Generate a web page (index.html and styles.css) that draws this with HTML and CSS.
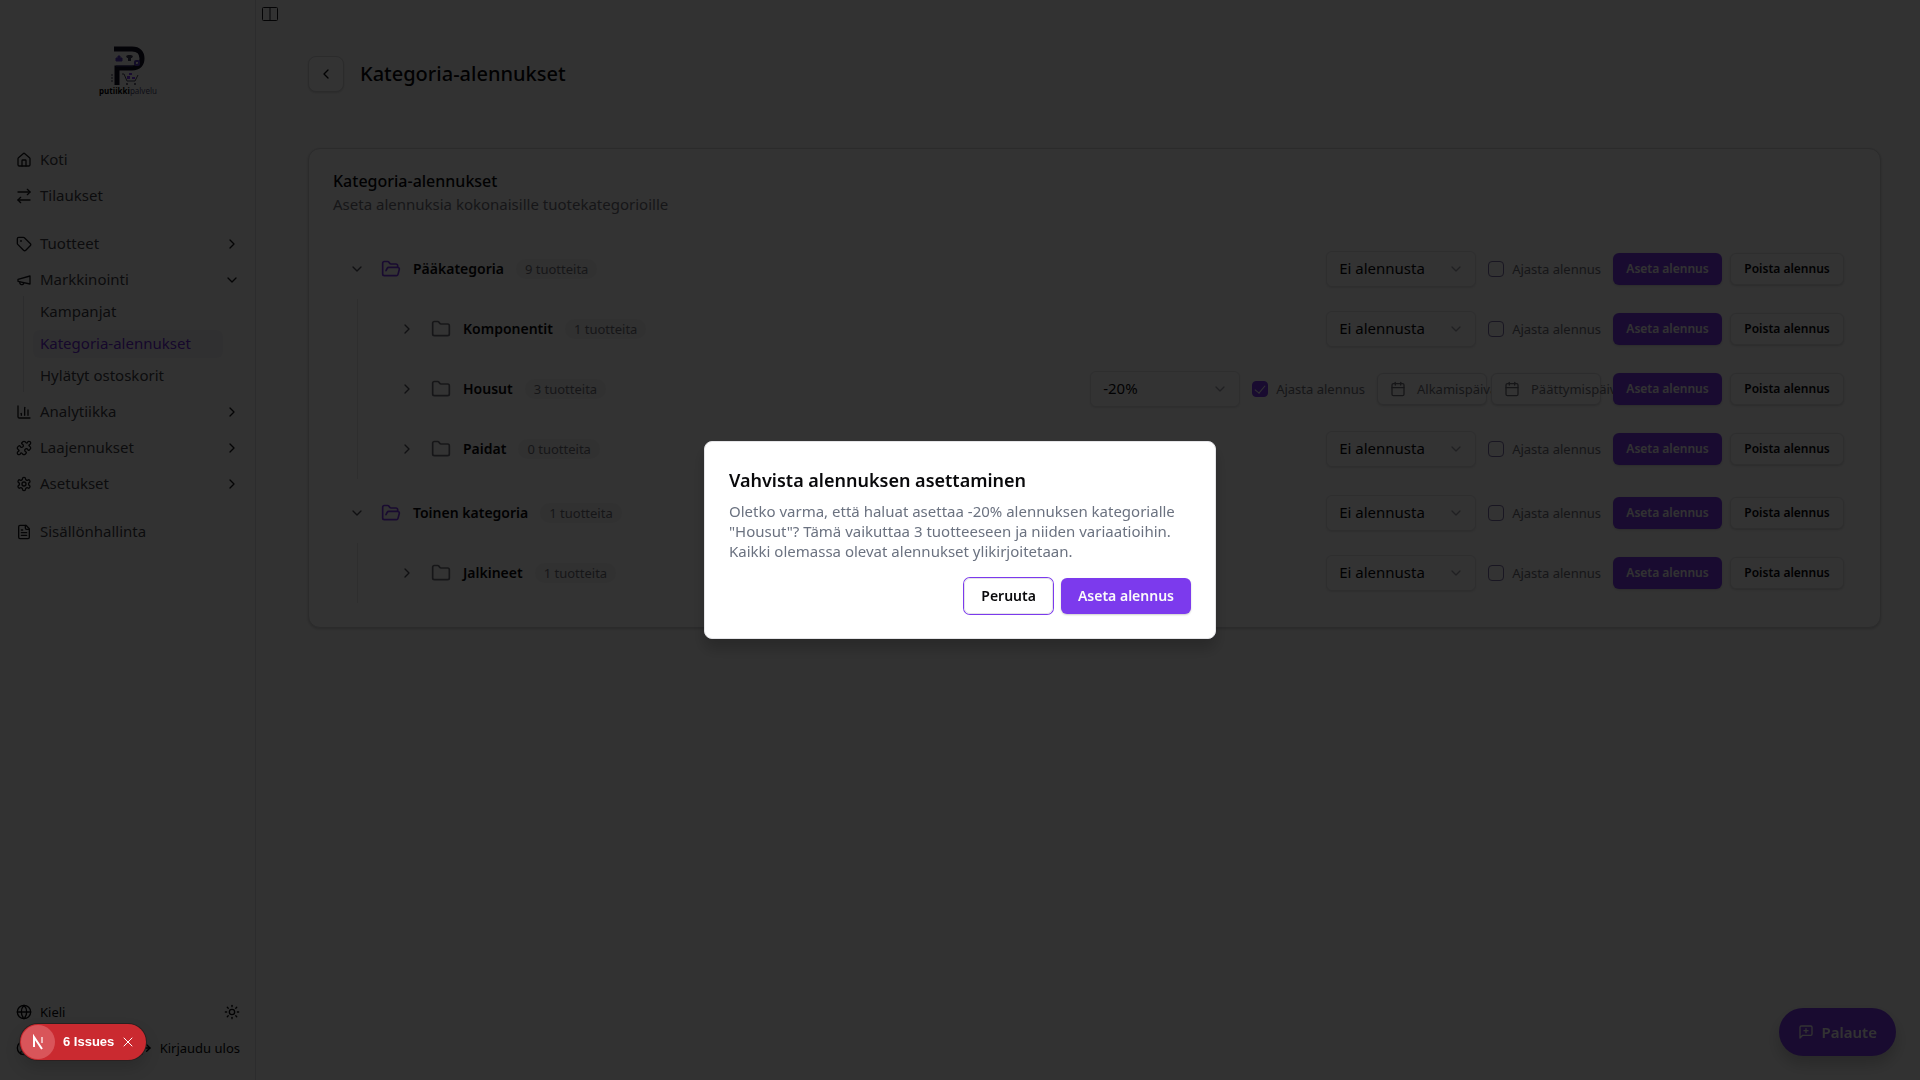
FILE: index.html
```
<!DOCTYPE html>
<html lang="fi">
<head>
    <meta charset="UTF-8">
    <meta name="viewport" content="width=device-width, initial-scale=1.0">
    <title>Kategoria-alennukset</title>
    <link rel="stylesheet" href="styles.css">
</head>
<body>
    <!-- Ikonit -->
    <svg class="sprite" aria-hidden="true">
        <symbol id="i-home" viewBox="0 0 24 24"><path d="M15 21v-8a1 1 0 0 0-1-1h-4a1 1 0 0 0-1 1v8"/><path d="M3 10a2 2 0 0 1 .709-1.528l7-5.999a2 2 0 0 1 2.582 0l7 5.999A2 2 0 0 1 21 10v9a2 2 0 0 1-2 2H5a2 2 0 0 1-2-2z"/></symbol>
        <symbol id="i-swap" viewBox="0 0 24 24"><path d="m17 2 4 4-4 4"/><path d="M3 6h18"/><path d="m7 22-4-4 4-4"/><path d="M21 18H3"/></symbol>
        <symbol id="i-tag" viewBox="0 0 24 24"><path d="M12.586 2.586A2 2 0 0 0 11.172 2H4a2 2 0 0 0-2 2v7.172a2 2 0 0 0 .586 1.414l8.704 8.704a2.426 2.426 0 0 0 3.42 0l6.58-6.58a2.426 2.426 0 0 0 0-3.42z"/><circle cx="7.5" cy="7.5" r=".5"/></symbol>
        <symbol id="i-megaphone" viewBox="0 0 24 24"><path d="m3 11 18-5v12L3 14v-3z"/><path d="M11.6 16.8a3 3 0 1 1-5.8-1.6"/></symbol>
        <symbol id="i-chart" viewBox="0 0 24 24"><path d="M3 3v16a2 2 0 0 0 2 2h16"/><path d="M18 17V9"/><path d="M13 17V5"/><path d="M8 17v-3"/></symbol>
        <symbol id="i-puzzle" viewBox="0 0 24 24"><path d="M19.439 7.85c-.049.322.059.648.289.878l1.568 1.568c.47.47.706 1.087.706 1.704s-.235 1.233-.706 1.704l-1.611 1.611a.98.98 0 0 1-.837.276c-.47-.07-.802-.48-.968-.925a2.501 2.501 0 1 0-3.214 3.214c.446.166.855.497.925.968a.979.979 0 0 1-.276.837l-1.61 1.61a2.404 2.404 0 0 1-1.705.707 2.402 2.402 0 0 1-1.704-.706l-1.568-1.568a1.026 1.026 0 0 0-.877-.29c-.493.074-.84.504-1.02.968a2.5 2.5 0 1 1-3.237-3.237c.464-.18.894-.527.967-1.02a1.026 1.026 0 0 0-.289-.877l-1.568-1.568A2.402 2.402 0 0 1 1.998 12c0-.617.236-1.234.706-1.704L4.23 8.77c.24-.24.581-.353.917-.303.515.077.877.528 1.073 1.01a2.5 2.5 0 1 0 3.259-3.259c-.482-.196-.933-.558-1.01-1.073-.05-.336.062-.676.303-.917l1.525-1.525A2.402 2.402 0 0 1 12 1.998c.617 0 1.234.236 1.704.706l1.568 1.568c.23.23.556.338.877.29.493-.074.84-.504 1.02-.968a2.5 2.5 0 1 1 3.237 3.237c-.464.18-.894.527-.967 1.02Z"/></symbol>
        <symbol id="i-gear" viewBox="0 0 24 24"><path d="M12.22 2h-.44a2 2 0 0 0-2 2v.18a2 2 0 0 1-1 1.73l-.43.25a2 2 0 0 1-2 0l-.15-.08a2 2 0 0 0-2.73.73l-.22.38a2 2 0 0 0 .73 2.73l.15.1a2 2 0 0 1 1 1.72v.51a2 2 0 0 1-1 1.74l-.15.09a2 2 0 0 0-.73 2.73l.22.38a2 2 0 0 0 2.73.73l.15-.08a2 2 0 0 1 2 0l.43.25a2 2 0 0 1 1 1.73V20a2 2 0 0 0 2 2h.44a2 2 0 0 0 2-2v-.18a2 2 0 0 1 1-1.73l.43-.25a2 2 0 0 1 2 0l.15.08a2 2 0 0 0 2.73-.73l.22-.39a2 2 0 0 0-.73-2.73l-.15-.08a2 2 0 0 1-1-1.74v-.5a2 2 0 0 1 1-1.74l.15-.09a2 2 0 0 0 .73-2.73l-.22-.38a2 2 0 0 0-2.73-.73l-.15.08a2 2 0 0 1-2 0l-.43-.25a2 2 0 0 1-1-1.73V4a2 2 0 0 0-2-2z"/><circle cx="12" cy="12" r="3"/></symbol>
        <symbol id="i-file" viewBox="0 0 24 24"><path d="M15 2H6a2 2 0 0 0-2 2v16a2 2 0 0 0 2 2h12a2 2 0 0 0 2-2V7Z"/><path d="M14 2v4a2 2 0 0 0 2 2h4"/><path d="M10 9H8"/><path d="M16 13H8"/><path d="M16 17H8"/></symbol>
        <symbol id="i-globe" viewBox="0 0 24 24"><circle cx="12" cy="12" r="10"/><path d="M12 2a14.5 14.5 0 0 0 0 20 14.5 14.5 0 0 0 0-20"/><path d="M2 12h20"/></symbol>
        <symbol id="i-sun" viewBox="0 0 24 24"><circle cx="12" cy="12" r="4"/><path d="M12 2v2"/><path d="M12 20v2"/><path d="m4.93 4.93 1.41 1.41"/><path d="m17.66 17.66 1.41 1.41"/><path d="M2 12h2"/><path d="M20 12h2"/><path d="m6.34 17.66-1.41 1.41"/><path d="m19.07 4.93-1.41 1.41"/></symbol>
        <symbol id="i-user" viewBox="0 0 24 24"><circle cx="12" cy="12" r="10"/><circle cx="12" cy="10" r="3"/><path d="M7 20.662V19a2 2 0 0 1 2-2h6a2 2 0 0 1 2 2v1.662"/></symbol>
        <symbol id="i-logout" viewBox="0 0 24 24"><path d="M9 21H5a2 2 0 0 1-2-2V5a2 2 0 0 1 2-2h4"/><path d="m16 17 5-5-5-5"/><path d="M21 12H9"/></symbol>
        <symbol id="i-right" viewBox="0 0 24 24"><path d="m9 18 6-6-6-6"/></symbol>
        <symbol id="i-left" viewBox="0 0 24 24"><path d="m15 18-6-6 6-6"/></symbol>
        <symbol id="i-down" viewBox="0 0 24 24"><path d="m6 9 6 6 6-6"/></symbol>
        <symbol id="i-folder" viewBox="0 0 24 24"><path d="M20 20a2 2 0 0 0 2-2V8a2 2 0 0 0-2-2h-7.900a2 2 0 0 1-1.690-.900L9.600 3.900A2 2 0 0 0 7.930 3H4a2 2 0 0 0-2 2v13a2 2 0 0 0 2 2Z"/></symbol>
        <symbol id="i-folder-open" viewBox="0 0 24 24"><path d="m6 14 1.500-2.900A2 2 0 0 1 9.240 10H20a2 2 0 0 1 1.940 2.500l-1.540 6a2 2 0 0 1-1.950 1.500H4a2 2 0 0 1-2-2V5a2 2 0 0 1 2-2h3.900a2 2 0 0 1 1.690.900l.810 1.200a2 2 0 0 0 1.670.900H18a2 2 0 0 1 2 2v2"/></symbol>
        <symbol id="i-calendar" viewBox="0 0 24 24"><path d="M8 2v4"/><path d="M16 2v4"/><rect width="18" height="18" x="3" y="4" rx="2"/><path d="M3 10h18"/></symbol>
        <symbol id="i-message" viewBox="0 0 24 24"><path d="M21 15a2 2 0 0 1-2 2H7l-4 4V5a2 2 0 0 1 2-2h14a2 2 0 0 1 2 2z"/><path d="M12 7v6"/><path d="M9 10h6"/></symbol>
        <symbol id="i-x" viewBox="0 0 24 24"><path d="M20 4 4 20"/><path d="m4 4 16 16"/></symbol>
    </svg>

    <div class="app">
        <!-- Sivupalkki -->
        <aside class="sidebar">
            <a class="logo" href="#">
                <svg width="34" height="40" viewBox="0 0 34 40" aria-hidden="true">
                    <path d="M3 3h18c7 0 10 4 10 9.500S28 22 21 22H6v17" fill="none" stroke="#120f26" stroke-width="5"/>
                    <path d="M5 20h17" stroke="#3b2f80" stroke-width="1"/>
                    <path d="M5 12h6v3H5zM7 12v-2h2v2" fill="#5b3fc4" stroke="#5b3fc4" stroke-width="1"/>
                    <path d="m15 10 2-1h3l2 1-1 2h-1v3h-3v-3h-1z" fill="#3f3d56"/>
                    <rect x="24" y="15" width="4" height="4" rx="1" fill="none" stroke="#5b3fc4" stroke-width="2"/>
                    <path d="M0 29h2M0 32h2M0 35h2" stroke="#3f3d56"/>
                    <path d="M11 28h2l3 7h8l3-6" fill="none" stroke="#3f3d56" stroke-width="1"/>
                    <path d="M16 30h3v3h-3zM21 31h3v2h-3zM18 27h3v2h-3z" fill="#7c3aed"/>
                    <circle cx="16" cy="38" r="1" fill="#3f3d56"/><circle cx="24" cy="38" r="1" fill="#3f3d56"/>
                </svg>
                <span class="logo-text"><b>putiikki</b>palvelu</span>
            </a>

            <nav class="nav">
                <ul>
                    <li><a class="nav-item" href="#"><svg class="icon"><use href="#i-home"/></svg><span>Koti</span></a></li>
                    <li><a class="nav-item" href="#"><svg class="icon"><use href="#i-swap"/></svg><span>Tilaukset</span></a></li>
                </ul>
                <ul>
                    <li><button class="nav-item"><svg class="icon"><use href="#i-tag"/></svg><span>Tuotteet</span><svg class="icon"><use href="#i-right"/></svg></button></li>
                    <li>
                        <button class="nav-item"><svg class="icon"><use href="#i-megaphone"/></svg><span>Markkinointi</span><svg class="icon"><use href="#i-down"/></svg></button>
                        <ul class="subnav">
                            <li><a href="#">Kampanjat</a></li>
                            <li><a class="active" href="#">Kategoria-alennukset</a></li>
                            <li><a href="#">Hylätyt ostoskorit</a></li>
                        </ul>
                    </li>
                    <li><button class="nav-item"><svg class="icon"><use href="#i-chart"/></svg><span>Analytiikka</span><svg class="icon"><use href="#i-right"/></svg></button></li>
                    <li><button class="nav-item"><svg class="icon"><use href="#i-puzzle"/></svg><span>Laajennukset</span><svg class="icon"><use href="#i-right"/></svg></button></li>
                    <li><button class="nav-item"><svg class="icon"><use href="#i-gear"/></svg><span>Asetukset</span><svg class="icon"><use href="#i-right"/></svg></button></li>
                </ul>
                <ul>
                    <li><a class="nav-item" href="#"><svg class="icon"><use href="#i-file"/></svg><span>Sisällönhallinta</span></a></li>
                </ul>
            </nav>

            <div class="sidebar-footer">
                <div class="footer-row">
                    <button class="footer-btn"><svg class="icon"><use href="#i-globe"/></svg>Kieli</button>
                    <button class="footer-btn" aria-label="Teema"><svg class="icon"><use href="#i-sun"/></svg></button>
                </div>
                <div class="footer-row">
                    <button class="footer-btn" aria-label="Profiili"><svg class="icon"><use href="#i-user"/></svg></button>
                    <button class="footer-btn"><svg class="icon"><use href="#i-logout"/></svg>Kirjaudu ulos</button>
                </div>
            </div>
        </aside>

        <!-- Sisältö -->
        <main class="main">
            <button class="trigger" aria-label="Sivupalkki">
                <svg width="16" height="14" viewBox="0 0 16 14"><rect x="0.500" y="0.500" width="15" height="13" rx="1"/><path d="M8 1v12"/></svg>
            </button>

            <header class="page-header">
                <button class="back" aria-label="Takaisin"><svg class="icon"><use href="#i-left"/></svg></button>
                <h1>Kategoria-alennukset</h1>
            </header>

            <section class="card">
                <h2>Kategoria-alennukset</h2>
                <p class="card-desc">Aseta alennuksia kokonaisille tuotekategorioille</p>

                <div class="tree">
                    <div class="node">
                        <div class="row">
                            <button class="toggle" aria-label="Sulje"><svg class="icon"><use href="#i-down"/></svg></button>
                            <svg class="folder open"><use href="#i-folder-open"/></svg>
                            <span class="name">Pääkategoria</span>
                            <span class="badge">9 tuotteita</span>
                            <div class="controls">
                                <div class="select"><select aria-label="Alennus"><option>Ei alennusta</option></select><svg class="icon"><use href="#i-down"/></svg></div>
                                <label class="schedule"><input type="checkbox">Ajasta alennus</label>
                                <div class="actions"><button class="btn primary">Aseta alennus</button><button class="btn outline">Poista alennus</button></div>
                            </div>
                        </div>
                        <div class="children">
                            <div class="row">
                                <button class="toggle" aria-label="Avaa"><svg class="icon"><use href="#i-right"/></svg></button>
                                <svg class="folder"><use href="#i-folder"/></svg>
                                <span class="name">Komponentit</span>
                                <span class="badge">1 tuotteita</span>
                                <div class="controls">
                                    <div class="select"><select aria-label="Alennus"><option>Ei alennusta</option></select><svg class="icon"><use href="#i-down"/></svg></div>
                                    <label class="schedule"><input type="checkbox">Ajasta alennus</label>
                                    <div class="actions"><button class="btn primary">Aseta alennus</button><button class="btn outline">Poista alennus</button></div>
                                </div>
                            </div>
                            <div class="row">
                                <button class="toggle" aria-label="Avaa"><svg class="icon"><use href="#i-right"/></svg></button>
                                <svg class="folder"><use href="#i-folder"/></svg>
                                <span class="name">Housut</span>
                                <span class="badge">3 tuotteita</span>
                                <div class="controls">
                                    <div class="select"><select aria-label="Alennus"><option>-20%</option></select><svg class="icon"><use href="#i-down"/></svg></div>
                                    <label class="schedule"><input type="checkbox" checked>Ajasta alennus</label>
                                    <div class="dates">
                                        <button class="date"><svg class="icon"><use href="#i-calendar"/></svg>Alkamispäivä</button>
                                        <button class="date"><svg class="icon"><use href="#i-calendar"/></svg>Päättymispäivä</button>
                                    </div>
                                    <div class="actions"><button class="btn primary">Aseta alennus</button><button class="btn outline">Poista alennus</button></div>
                                </div>
                            </div>
                            <div class="row">
                                <button class="toggle" aria-label="Avaa"><svg class="icon"><use href="#i-right"/></svg></button>
                                <svg class="folder"><use href="#i-folder"/></svg>
                                <span class="name">Paidat</span>
                                <span class="badge">0 tuotteita</span>
                                <div class="controls">
                                    <div class="select"><select aria-label="Alennus"><option>Ei alennusta</option></select><svg class="icon"><use href="#i-down"/></svg></div>
                                    <label class="schedule"><input type="checkbox">Ajasta alennus</label>
                                    <div class="actions"><button class="btn primary">Aseta alennus</button><button class="btn outline">Poista alennus</button></div>
                                </div>
                            </div>
                        </div>
                    </div>

                    <div class="node">
                        <div class="row">
                            <button class="toggle" aria-label="Sulje"><svg class="icon"><use href="#i-down"/></svg></button>
                            <svg class="folder open"><use href="#i-folder-open"/></svg>
                            <span class="name">Toinen kategoria</span>
                            <span class="badge">1 tuotteita</span>
                            <div class="controls">
                                <div class="select"><select aria-label="Alennus"><option>Ei alennusta</option></select><svg class="icon"><use href="#i-down"/></svg></div>
                                <label class="schedule"><input type="checkbox">Ajasta alennus</label>
                                <div class="actions"><button class="btn primary">Aseta alennus</button><button class="btn outline">Poista alennus</button></div>
                            </div>
                        </div>
                        <div class="children">
                            <div class="row">
                                <button class="toggle" aria-label="Avaa"><svg class="icon"><use href="#i-right"/></svg></button>
                                <svg class="folder"><use href="#i-folder"/></svg>
                                <span class="name">Jalkineet</span>
                                <span class="badge">1 tuotteita</span>
                                <div class="controls">
                                    <div class="select"><select aria-label="Alennus"><option>Ei alennusta</option></select><svg class="icon"><use href="#i-down"/></svg></div>
                                    <label class="schedule"><input type="checkbox">Ajasta alennus</label>
                                    <div class="actions"><button class="btn primary">Aseta alennus</button><button class="btn outline">Poista alennus</button></div>
                                </div>
                            </div>
                        </div>
                    </div>
                </div>
            </section>
        </main>
    </div>

    <button class="feedback"><svg class="icon"><use href="#i-message"/></svg>Palaute</button>

    <!-- Vahvistusikkuna -->
    <div class="overlay">
        <div class="modal" role="alertdialog" aria-labelledby="modal-title" aria-describedby="modal-text">
            <h2 id="modal-title">Vahvista alennuksen asettaminen</h2>
            <p id="modal-text">Oletko varma, että haluat asettaa -20% alennuksen kategorialle "Housut"? Tämä vaikuttaa 3 tuotteeseen ja niiden variaatioihin. Kaikki olemassa olevat alennukset ylikirjoitetaan.</p>
            <div class="modal-buttons">
                <button class="modal-btn cancel">Peruuta</button>
                <button class="modal-btn confirm">Aseta alennus</button>
            </div>
        </div>
    </div>

    <div class="issues">
        <span class="issues-logo">
            <svg width="16" height="16" viewBox="0 0 16 16" fill="none" stroke="#fff" stroke-width="2"><path d="M4 13V3l8 12"/><path d="M12 3v6" stroke-opacity="0.6"/></svg>
        </span>
        <button class="issues-text">6 Issues</button>
        <button class="issues-close" aria-label="Close"><svg class="icon"><use href="#i-x"/></svg></button>
    </div>
</body>
</html>
```
FILE: styles.css
```
* {
    box-sizing: border-box;
}

body {
    font-family: "Noto Sans", "Open Sans", sans-serif;
    font-size: 15px;
    line-height: 20px;
    margin: 0;
    color: #09090b;
    background-color: #fafafa;
}

h1, h2, p, ul {
    margin: 0;
    padding: 0;
}

ul {
    list-style: none;
}

a {
    color: inherit;
    text-decoration: none;
}

button, select {
    font: inherit;
    color: inherit;
    background: none;
    border: none;
    padding: 0;
    cursor: pointer;
}

.sprite {
    display: none;
}

.icon {
    width: 16px;
    height: 16px;
    flex-shrink: 0;
    fill: none;
    stroke: currentColor;
    stroke-width: 2;
    stroke-linecap: round;
    stroke-linejoin: round;
}

.app {
    display: flex;
    min-height: 100vh;
}

/* Sivupalkki */
.sidebar {
    display: flex;
    flex-direction: column;
    width: 256px;
    flex-shrink: 0;
    padding: 0 7px 16px 8px;
    border-right: 1px solid #dcdce0;
}

.logo {
    display: flex;
    flex-direction: column;
    align-items: center;
    height: 144px;
    padding-top: 46px;
}

.logo-text {
    font-size: 8px;
    line-height: 10px;
    color: #4b4870;
}

.logo-text b {
    color: #000;
}

.nav {
    display: flex;
    flex-direction: column;
    gap: 16px;
    color: #3f3f46;
}

.nav > ul {
    display: flex;
    flex-direction: column;
    gap: 4px;
}

.nav-item {
    display: flex;
    align-items: center;
    gap: 8px;
    width: 100%;
    height: 32px;
    padding: 0 8px;
    text-align: left;
}

.nav-item span {
    flex: 1;
    padding-bottom: 2px;
}

.nav-item .icon {
    color: #18181b;
}

.subnav {
    display: flex;
    flex-direction: column;
    gap: 4px;
    margin: 0 25px 0 15px;
    padding: 2px 0 2px 9px;
    border-left: 1px solid #dcdce0;
}

.subnav a {
    display: block;
    padding: 3px 7px 5px;
    border-radius: 6px;
    white-space: nowrap;
}

.subnav .active {
    color: #6d28d9;
    background-color: #f1f1f3;
}

.sidebar-footer {
    display: flex;
    flex-direction: column;
    gap: 4px;
    margin-top: auto;
    padding: 0 8px;
    font-size: 13px;
}

.footer-row {
    display: flex;
    justify-content: space-between;
}

.footer-btn {
    display: flex;
    align-items: center;
    gap: 8px;
    height: 32px;
}

/* Sisältö */
.main {
    flex: 1;
    min-width: 0;
}

.trigger {
    display: block;
    height: 28px;
    padding-left: 6px;
}

.trigger svg {
    display: block;
    fill: none;
    stroke: #18181b;
}

.page-header {
    display: flex;
    align-items: center;
    gap: 16px;
    padding: 28px 52px 56px;
}

.back {
    display: flex;
    align-items: center;
    justify-content: center;
    width: 36px;
    height: 36px;
    border: 1px solid #d4d4d8;
    border-radius: 8px;
    background-color: #fff;
    box-shadow: 0 1px 2px rgba(0, 0, 0, 0.15);
}

h1 {
    font-size: 20px;
    line-height: 28px;
    font-weight: 500;
}

.card {
    margin: 0 39px 0 52px;
    padding: 24px 24px 20px;
    border: 1px solid #d4d4d8;
    border-radius: 12px;
    background-color: #fdfdfd;
    box-shadow: 0 1px 3px rgba(0, 0, 0, 0.2);
}

.card h2 {
    font-size: 16px;
    line-height: 16px;
    font-weight: 500;
}

.card-desc {
    margin-top: 5px;
    color: #71717a;
}

/* Kategoriapuu */
.tree {
    display: flex;
    flex-direction: column;
    gap: 8px;
    padding: 29px 0 4px;
}

.row {
    display: flex;
    align-items: center;
    gap: 12px;
    padding: 8px 12px;
}

.children {
    display: flex;
    flex-direction: column;
    gap: 8px;
    margin: 4px 0 0 24px;
    padding: 4px 0 4px 25px;
    border-left: 1px solid #e4e4e7;
}

.toggle {
    display: flex;
    align-items: center;
    justify-content: center;
    width: 24px;
    height: 24px;
    color: #52525b;
}

.folder {
    width: 20px;
    height: 20px;
    fill: none;
    stroke: #71717a;
    stroke-width: 2;
    stroke-linecap: round;
    stroke-linejoin: round;
}

.folder.open {
    stroke: #7c3aed;
}

.name {
    font-size: 14px;
    font-weight: 600;
}

.badge {
    padding: 0 9px;
    border-radius: 10px;
    font-size: 13px;
    color: #71717a;
    background-color: #f4f4f5;
}

.controls {
    display: flex;
    align-items: center;
    gap: 12px;
    margin-left: auto;
    white-space: nowrap;
}

.select {
    position: relative;
    width: 150px;
}

.select select {
    display: block;
    appearance: none;
    width: 100%;
    height: 36px;
    padding: 0 12px 2px;
    border: 1px solid #e4e4e7;
    border-radius: 6px;
    background-color: #fff;
    box-shadow: 0 1px 2px rgba(0, 0, 0, 0.1);
}

.select .icon {
    position: absolute;
    right: 12px;
    top: 10px;
    color: #a1a1aa;
    pointer-events: none;
}

.schedule {
    display: flex;
    align-items: center;
    gap: 8px;
    font-size: 13px;
    color: #71717a;
}

.schedule input {
    display: grid;
    place-items: center;
    appearance: none;
    width: 16px;
    height: 16px;
    margin: 0;
    border: 1px solid #7c6fa8;
    border-radius: 4px;
}

.schedule input:checked {
    border-color: #7c3aed;
    background-color: #7c3aed;
}

.schedule input:checked::before {
    content: "";
    width: 5px;
    height: 9px;
    margin-bottom: 2px;
    border: solid #fafafa;
    border-width: 0 1px 1px 0;
    transform: rotate(40deg);
}

.dates {
    display: flex;
    gap: 4px;
}

.date {
    display: flex;
    align-items: center;
    gap: 11px;
    width: 110px;
    height: 32px;
    padding: 0 12px;
    border: 1px solid #dcdce0;
    border-radius: 6px;
    font-size: 13px;
    color: #71717a;
    background-color: #fff;
    box-shadow: 0 1px 2px rgba(0, 0, 0, 0.15);
}

.actions {
    display: flex;
    gap: 8px;
}

.btn {
    width: 109px;
    height: 32px;
    border-radius: 6px;
    font-size: 12px;
    font-weight: 600;
    box-shadow: 0 1px 2px rgba(0, 0, 0, 0.15);
}

.btn.primary {
    color: #fafafa;
    background-color: #7c3aed;
}

.btn.outline {
    width: 114px;
    border: 1px solid #e4e4e7;
    background-color: #fff;
}

.feedback {
    position: fixed;
    right: 24px;
    bottom: 24px;
    display: flex;
    align-items: center;
    gap: 8px;
    height: 48px;
    padding: 0 19px;
    border-radius: 24px;
    font-weight: 600;
    color: #fafafa;
    background-color: #7c3aed;
    box-shadow: 0 8px 16px rgba(0, 0, 0, 0.2);
}

/* Vahvistusikkuna */
.overlay {
    position: fixed;
    inset: 0;
    display: flex;
    align-items: center;
    justify-content: center;
    background-color: rgba(0, 0, 0, 0.8);
}

.modal {
    width: 512px;
    padding: 24px;
    border: 1px solid #e4e4e7;
    border-radius: 8px;
    background-color: #fff;
    box-shadow: 0 10px 15px rgba(0, 0, 0, 0.2);
}

.modal h2 {
    font-size: 18px;
    line-height: 28px;
    font-weight: 600;
}

.modal p {
    margin-top: 7px;
    color: #6b7280;
}

.modal-buttons {
    display: flex;
    justify-content: flex-end;
    gap: 8px;
    margin-top: 17px;
}

.modal-btn {
    height: 36px;
    padding: 0 17px;
    border-radius: 6px;
    font-size: 14px;
    font-weight: 600;
}

.cancel {
    padding: 0 16px;
    border: 1px solid #e4e4e7;
    box-shadow: 0 0 0 1px #7c3aed;
}

.confirm {
    color: #fafafa;
    background-color: #7c3aed;
    box-shadow: 0 1px 2px rgba(0, 0, 0, 0.2);
}

.issues {
    position: fixed;
    left: 20px;
    bottom: 20px;
    display: flex;
    align-items: center;
    width: 126px;
    height: 36px;
    padding: 1px;
    border-radius: 18px;
    color: #fff;
    background-color: #ca2a30;
    box-shadow: 0 0 0 1px #2a2020, 0 8px 16px rgba(0, 0, 0, 0.15);
}

.issues-logo {
    display: flex;
    align-items: center;
    justify-content: center;
    width: 34px;
    height: 34px;
    border-radius: 50%;
    background-color: #d9555a;
}

.issues-text {
    margin-left: 8px;
    font: 700 13px/20px "Liberation Sans", sans-serif;
}

.issues-close {
    display: flex;
    margin-left: 8px;
}

.issues-close .icon {
    width: 12px;
    height: 12px;
}
```
